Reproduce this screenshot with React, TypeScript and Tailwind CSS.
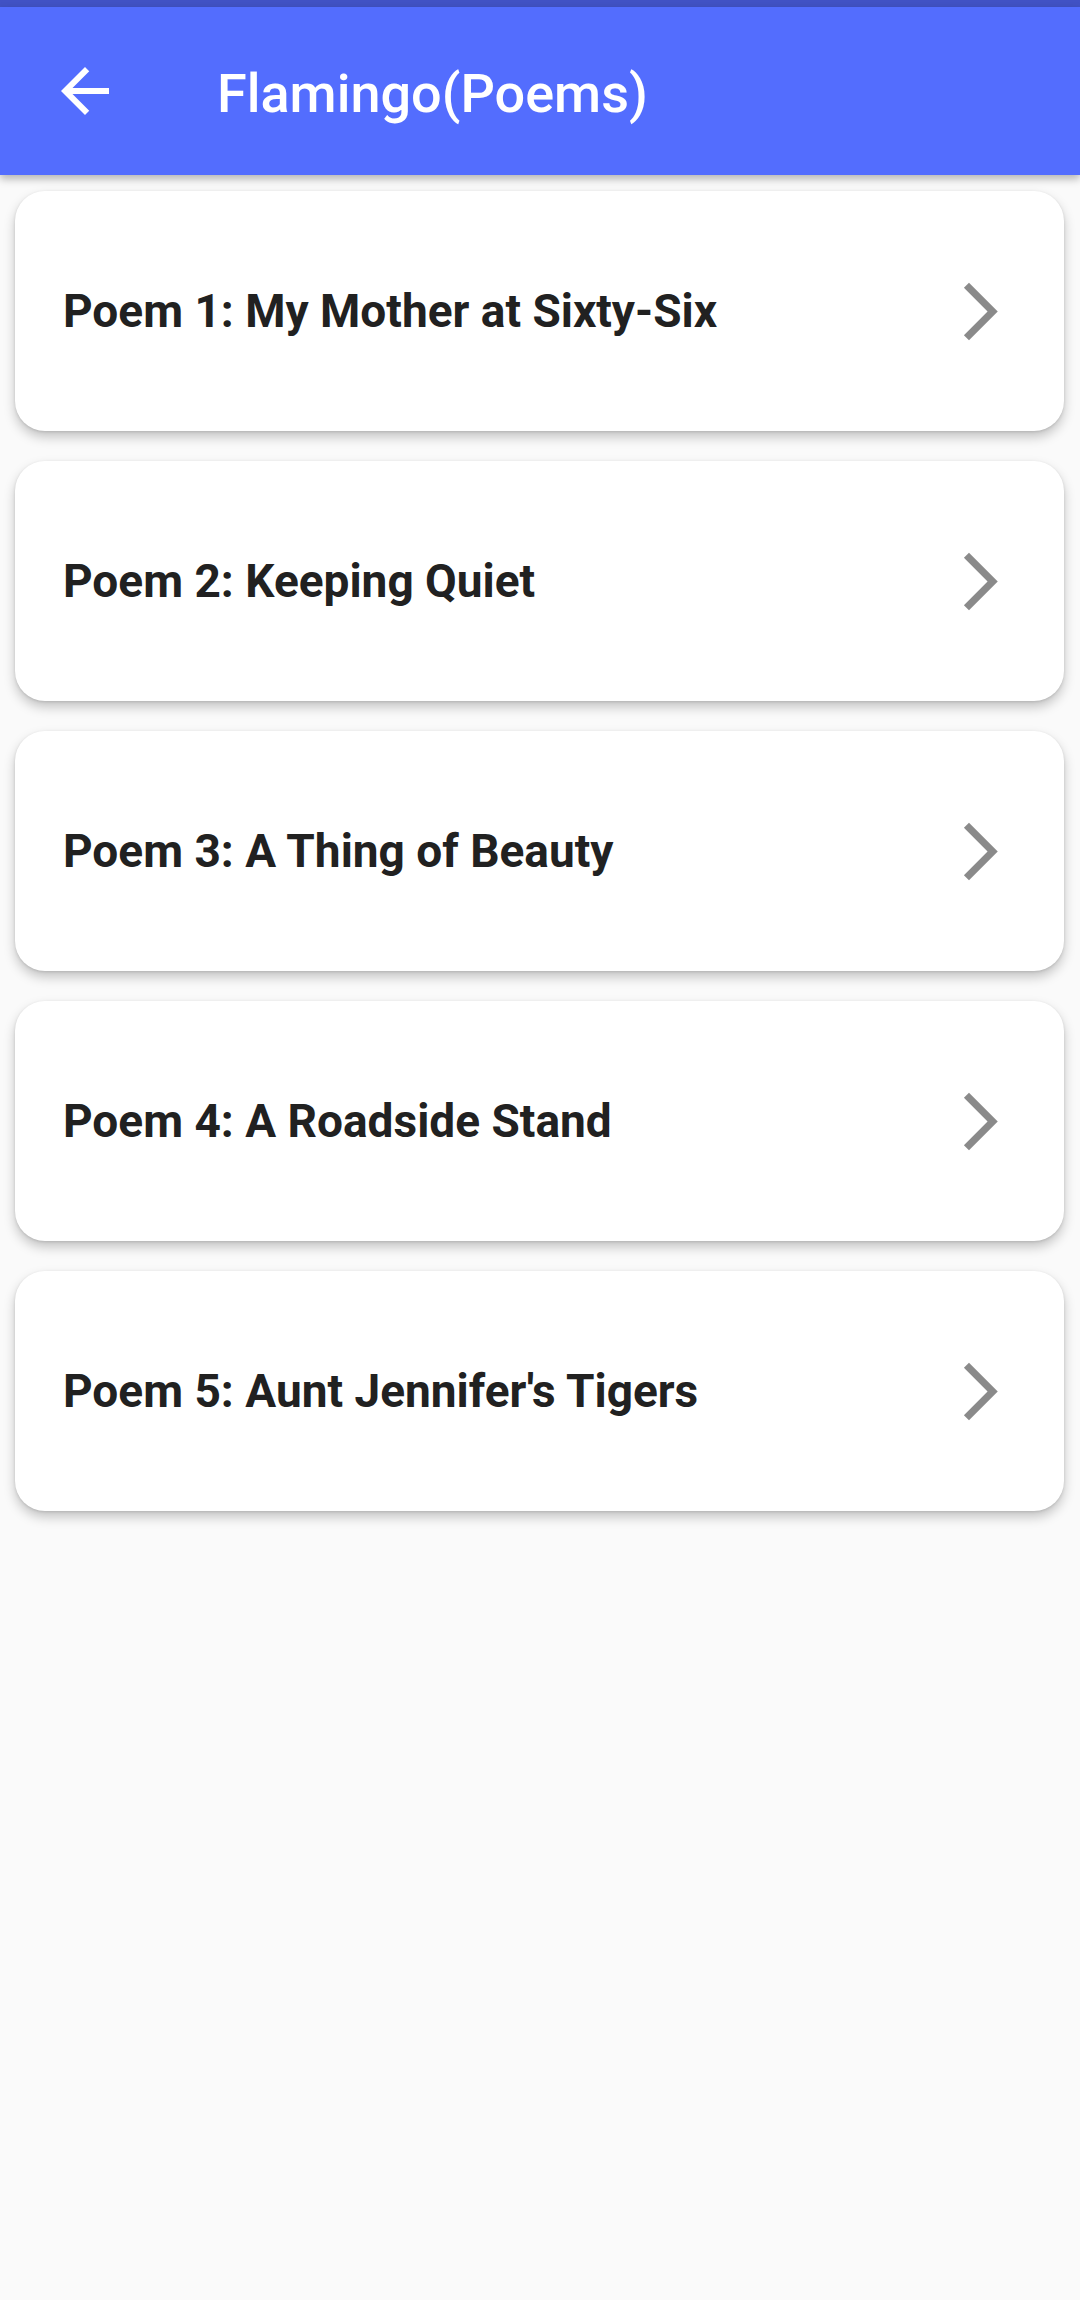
import React from "react";

const poems = [
  "Poem 1: My Mother at Sixty-Six",
  "Poem 2: Keeping Quiet",
  "Poem 3: A Thing of Beauty",
  "Poem 4: A Roadside Stand",
  "Poem 5: Aunt Jennifer's Tigers",
];

function BackArrow() {
  return (
    <svg width="72" height="72" viewBox="0 0 24 24" fill="#ffffff">
      <path d="M20 11H7.83l5.59-5.59L12 4l-8 8 8 8 1.41-1.41L7.83 13H20v-2z" />
    </svg>
  );
}

function Chevron() {
  return (
    <svg width="69" height="69" viewBox="0 0 24 24" fill="#8a8a8a">
      <path d="M6.23 20.23L8 22l10-10L8 2 6.23 3.77 14.46 12z" />
    </svg>
  );
}

export default function App() {
  return (
    <div
      className="min-h-[2300px] w-[1080px] bg-[#fafafa]"
      style={{ fontFamily: "Roboto, 'Noto Sans', sans-serif" }}
    >
      <div className="h-[7px] bg-[#4152c4]" />
      <header className="relative z-10 flex h-[168px] items-center bg-[#536dfe] shadow-[0_4px_8px_rgba(0,0,0,0.28)]">
        <div className="ml-[49px] flex h-[72px] w-[72px] items-center justify-center">
          <BackArrow />
        </div>
        <h1 className="ml-[96px] pt-[5px] text-[54px] font-medium leading-none text-white">
          Flamingo(Poems)
        </h1>
      </header>

      <main className="flex flex-col gap-[30px] pl-[15px] pr-[16px] pt-[16px]">
        {poems.map((p) => (
          <div
            key={p}
            className="flex h-[240px] items-center justify-between rounded-[30px] bg-white pl-[48px] pr-[49px] shadow-[0_6px_12px_rgba(0,0,0,0.22),0_1px_3px_rgba(0,0,0,0.12)]"
          >
            <span className="text-[46px] font-bold leading-none text-[#212121]">{p}</span>
            <Chevron />
          </div>
        ))}
      </main>
    </div>
  );
}
